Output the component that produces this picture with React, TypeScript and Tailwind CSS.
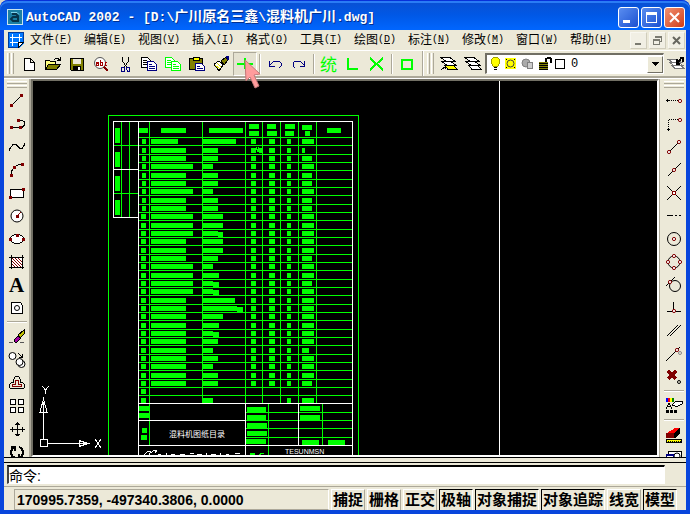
import type { ReactNode } from "react";

const GREEN = "#00ff00";
const RED = "#800000";

type Tool = { label: string; icon: ReactNode } | "sep";

function Icon({ children }: { children: ReactNode }) {
  return (
    <svg width="16" height="16" viewBox="0 0 16 16" fill="none" stroke="#000" shapeRendering="crispEdges" overflow="visible" aria-hidden="true">
      {children}
    </svg>
  );
}

function Dot({ x, y }: { x: number; y: number }) {
  return <rect x={x - 1} y={y - 1} width="3" height="3" fill={RED} stroke="none" />;
}

function Ring({ x, y }: { x: number; y: number }) {
  return <circle cx={x} cy={y} r="1.6" fill="#fff" stroke={RED} shapeRendering="geometricPrecision" />;
}

function Circle({ x, y, r, fill = "none", stroke = "#000" }: { x: number; y: number; r: number; fill?: string; stroke?: string }) {
  return <circle cx={x} cy={y} r={r} fill={fill} stroke={stroke} shapeRendering="geometricPrecision" />;
}

const standardTools: Tool[] = [
  { label: "新建", icon: <path d="M3.5 2.5h6l4 4v8h-10zM9.5 2.5v4h4" fill="#fff" /> },
  {
    label: "打开",
    icon: (
      <>
        <path d="M.5 13.5v-9h4l1 1h5v3" fill="#ffff80" />
        <path d="M.5 13.5l3-5h12l-4 5z" fill="#808000" />
        <path d="M9 3.5l2-1h2l2 2M15.5 1v4M12 4.5h3" />
      </>
    ),
  },
  {
    label: "保存",
    icon: (
      <>
        <path d="M1.5 2.5h13v12h-12l-1-1z" fill="#808000" />
        <path d="M4 3h8v5H4z" fill="#ece9d8" stroke="none" />
        <path d="M4 10h8v4H4z" fill="#000" stroke="none" />
        <path d="M9 11h2v3H9z" fill="#fff" stroke="none" />
      </>
    ),
  },
  {
    label: "查找",
    icon: (
      <>
        <Circle x={7} y={7} r={5.5} fill="#fff" stroke="#555" />
        <path d="M3 6.5h2v3H3v-2h2M7.5 4v5.5h2v-3h-2M14 6.5h-2v3h2" stroke="#a00000" />
        <path d="M11 11l4 4" stroke={RED} strokeWidth="2" />
      </>
    ),
  },
  {
    label: "剪切",
    icon: (
      <>
        <path d="M5.5 1v4l4 6M11.5 1v4l-4 6" />
        <path d="M4.5 11h2l1 1v3h-3zM9.5 11h3v4h-2l-1-2z" stroke="#000080" />
      </>
    ),
  },
  {
    label: "复制",
    icon: (
      <>
        <path d="M.5 1.5h6l3 3v7h-9z" fill="#fff" />
        <path d="M2 4.5h4M2 6.5h6M2 8.5h6" />
        <path d="M6.5 5.5h6l3 3v6h-9z" fill="#fff" stroke="#000080" />
        <path d="M8 8.5h3M8 10.5h6M8 12.5h6" stroke="#000080" />
      </>
    ),
  },
  {
    label: "带基点复制",
    icon: (
      <>
        <path d="M.5 1.5h6l3 3v7h-9z" fill="#fff" stroke={GREEN} />
        <path d="M2 4.5h4M2 6.5h6M2 8.5h6" stroke={GREEN} />
        <path d="M6.5 5.5h6l3 3v6h-9z" fill="#fff" stroke={GREEN} />
        <path d="M8 8.5h3M8 10.5h6M8 12.5h6" stroke={GREEN} />
      </>
    ),
  },
  {
    label: "粘贴",
    icon: (
      <>
        <path d="M.5 2.5h13v11H.5z" fill="#808000" />
        <path d="M4 1h6v3H4z" fill="#ffff00" />
        <path d="M6.5 7.5h6l3 3v4h-9z" fill="#fff" stroke="#000080" />
        <path d="M8 10.5h3M8 12.5h6" stroke="#000080" />
      </>
    ),
  },
  {
    label: "特性匹配",
    icon: (
      <>
        <path d="M1 8l5-3 4 4-4 6z" fill="#fff" />
        <path d="M2 9l5 4M4 7l4 4" stroke="#e0e000" />
        <path d="M8 5l5-4 2 3-4 5z" fill="#808000" />
        <path d="M13 1h2v3" stroke="#000080" strokeWidth="2" />
      </>
    ),
  },
  { label: "平移", icon: <path d="M0 8h16M8 2v11" stroke={GREEN} strokeWidth="2" /> },
  "sep",
  { label: "放弃", icon: <path d="M2.5 5v5h5M3 9l3-3 3-1h3l2 2v3l-2 2" stroke="#000080" /> },
  { label: "重做", icon: <path d="M13.5 5v5h-5M13 9l-3-3-3-1H4L2 7v3l2 2" stroke="#000080" /> },
  "sep",
  { label: "统", icon: <text x="-1" y="15" fontSize="17" fill={GREEN} stroke="none" fontFamily="Noto Sans CJK SC, sans-serif">统</text> },
  { label: "直角", icon: <path d="M3 2v11h10" stroke={GREEN} strokeWidth="2" /> },
  { label: "交叉", icon: <path d="M1 2l13 12M14 2L1 14" stroke={GREEN} strokeWidth="2" /> },
  "sep",
  { label: "矩形框", icon: <path d="M3 4h10v9H3z" stroke={GREEN} strokeWidth="2" /> },
];

const drawTools: Tool[] = [
  { label: "直线", icon: <><path d="M2 13L13 2" /><Dot x={2} y={12} /><Dot x={12} y={2} /></> },
  { label: "多段线", icon: <><path d="M2 11.500h11l2-2v-4l-2-1.500h-4" /><Dot x={2} y={11} /><Dot x={11} y={11} /><Dot x={9} y={4} /></> },
  { label: "样条曲线", icon: <path d="M.5 12v-2L4 5.500h3l4 4h2l2-3v-3" /> },
  { label: "圆弧", icon: <><path d="M2 13c0-6 5-11 12-11" /><Dot x={2} y={13} /><Dot x={5} y={5} /><Dot x={13} y={2} /></> },
  { label: "矩形", icon: <><path d="M1.5 4.500h13v8h-13z" fill="#fff" /><Dot x={14} y={4} /><Dot x={1} y={12} /></> },
  { label: "圆", icon: <><Circle x={8} y={8} r={6} fill="#fff" /><path d="M8 8l4-4" stroke={RED} /><Dot x={8} y={8} /></> },
  { label: "椭圆", icon: <><ellipse cx="8" cy="8" rx="7" ry="4.5" fill="#fff" /><Dot x={1} y={8} /><Dot x={8} y={4} /><Dot x={14} y={8} /></> },
  {
    label: "图案填充",
    icon: (
      <>
        <path d="M3 4h10v9H3z" fill="#fff" stroke="none" />
        <path d="M3 4l9 9M6 4l7 7M9 4l4 4M3 7l6 6M3 10l3 3" stroke={RED} />
        <path d="M0 3.5h15M0 13.5h15M2.5 1v14M13.5 1v14" />
      </>
    ),
  },
  { label: "文字", icon: <text x="0" y="15" fontSize="21" fontWeight="bold" fill="#000" stroke="none" fontFamily="Liberation Serif, serif">A</text> },
  { label: "面域", icon: <><path d="M2.5 2.5h9l2 3v8h-11z" fill="#fff" /><Circle x={8} y={8} r={2.5} /></> },
  "sep",
  {
    label: "删除",
    icon: (
      <>
        <path d="M9 6l6-5v4l-5 5z" fill="#c0c000" />
        <path d="M5 11l4-4 3 2-4 4H6z" fill="#a000a0" />
        <path d="M0 13.5h4M11 13.5h4" stroke="#555" />
      </>
    ),
  },
  {
    label: "复制对象",
    icon: (
      <>
        <Circle x={3.5} y={4} r={3.5} fill="#fff" />
        <Circle x={12.5} y={12} r={3.5} fill="#fff" />
        <Circle x={10.5} y={10} r={3.5} fill="#fff" />
        <path d="M9 1l4 4M13.5 2v4M10 5.5h4" />
      </>
    ),
  },
  {
    label: "偏移",
    icon: (
      <>
        <path d="M.5 12.500v-3l2-2h2v-3l2-3h3l2 3v3h2l2 2v3l-1 1h-13z" />
        <path d="M3.5 11.500v-2h3v-4h3v4h3v2z" stroke={RED} />
      </>
    ),
  },
  {
    label: "阵列",
    icon: <path d="M1.5 1.5h5v5h-5zM9.5 1.5h5v5h-5zM1.5 9.5h5v5h-5zM9.5 9.5h5v5h-5z" fill="#fff" />,
  },
  { label: "移动", icon: <path d="M8.5 1v14M1 8.5h15M6 3.5h5M3.5 6v5M6 13.5h5M13.5 6v5M7 2.5h3M7 14.5h3" /> },
  { label: "旋转", icon: <path d="M6 14c-5-2-5-8-1-11M2 3h4v4M10 3c5 2 5 8 1 11M14 14h-4v-4" strokeWidth="2" /> },
];

const snapTools: Tool[] = [
  { label: "临时追踪点", icon: <><path d="M0 7.5h3M1.5 6v3" /><path d="M3 7.5h9" strokeDasharray="1 1" /><Ring x={14} y={8} /></> },
  { label: "捕捉自", icon: <><path d="M2.5 3.5v10M3 3.5h9" strokeDasharray="1 1" /><path d="M1 13.5h3M2.5 12v3" /><Ring x={14} y={4} /></> },
  { label: "端点", icon: <><path d="M3 13L13 3" /><Ring x={3} y={13} /><Ring x={13} y={3} /></> },
  { label: "中点", icon: <><path d="M2 14L15 1" /><Ring x={8} y={8} /></> },
  { label: "交点", icon: <><path d="M1 1l14 14M15 1L1 15" /><rect x="6.5" y="6.5" width="3" height="3" fill="#fff" stroke={RED} /></> },
  { label: "外观交点", icon: <path d="M1 7.5h6M9 7.5h2M13 7.5h2" /> },
  { label: "圆心", icon: <><Circle x={8} y={8} r={6.5} /><Ring x={8} y={8} /></> },
  { label: "象限点", icon: <><Circle x={8} y={8} r={6} /><Ring x={8} y={2} /><Ring x={2} y={8} /><Ring x={14} y={8} /><Ring x={8} y={14} /></> },
  { label: "切点", icon: <><Circle x={9} y={9} r={5.5} /><path d="M0 9l9-9" /><Ring x={4} y={5} /></> },
  { label: "垂足", icon: <><path d="M7.5 2v10M1 11.5h14" /><Ring x={8} y={11} /></> },
  { label: "平行", icon: <path d="M1 13L12 2M4 13L15 2" /> },
  { label: "最近点", icon: <><path d="M0 15L14 1" /><Circle x={14} y={7} r={1.5} stroke="#888" /><Ring x={11} y={4} /></> },
  { label: "无捕捉", icon: <><path d="M2 2l8 8M10 2l-8 8" stroke={RED} strokeWidth="3" /><Circle x={13} y={13} r={1.5} /></> },
  "sep",
  {
    label: "对象捕捉设置",
    icon: (
      <>
        <path d="M0 0h2v4H0z" fill="#0000ff" stroke="none" />
        <path d="M2 0h2v4H2z" fill="#ff0000" stroke="none" />
        <path d="M4 0h2v4H4z" fill="#ffff00" stroke="none" />
        <path d="M6 0h2v4H6z" fill="#008000" stroke="none" />
        <path d="M0 11l3-6 3 6M1 8.5h4" />
        <path d="M6 7l4-4h6v3l-4 2H9z" fill="#fff" />
        <path d="M0 13.5h3M4 13.5h3M8 13.5h3" strokeWidth="3" />
      </>
    ),
  },
  "sep",
  {
    label: "渲染",
    icon: (
      <>
        <path d="M1 6l8-5h5l-6 5z" fill="#ff0000" stroke="none" />
        <path d="M0 6h8v5H0z" fill={RED} stroke="none" />
        <path d="M8 6l6-5v5l-5 5H8z" fill="#000" stroke="none" />
        <path d="M.5 12.5h15v3H.5z" fill="#ffff00" />
        <path d="M2 14.5h13" strokeDasharray="1 1" />
      </>
    ),
  },
  {
    label: "命名视图",
    icon: (
      <>
        <path d="M2.5 1.5h13v13h-13z" fill="#fff" />
        <Circle x={11} y={6} r={3} />
        <path d="M.5 4.5h7v5h-7z" fill="#fff" stroke="#000080" />
        <path d="M0 5.5h8" stroke="#000080" />
      </>
    ),
  },
];

const menus = [
  ["文件", "F"],
  ["编辑", "E"],
  ["视图", "V"],
  ["插入", "I"],
  ["格式", "O"],
  ["工具", "T"],
  ["绘图", "D"],
  ["标注", "N"],
  ["修改", "M"],
  ["窗口", "W"],
  ["帮助", "H"],
];

const modes = [
  { label: "捕捉", on: false },
  { label: "栅格", on: false },
  { label: "正交", on: false },
  { label: "极轴", on: true },
  { label: "对象捕捉", on: true },
  { label: "对象追踪", on: true },
  { label: "线宽", on: false },
  { label: "模型", on: true },
];

function GripV() {
  return (
    <div className="flex shrink-0 gap-px py-0.5 pl-[3px]" aria-hidden="true">
      <i className="w-[3px] border-r border-l border-l-white border-r-[#aca899]" />
      <i className="w-[3px] border-r border-l border-l-white border-r-[#aca899]" />
    </div>
  );
}

function GripH() {
  return (
    <div className="flex w-full shrink-0 flex-col gap-px px-0.5 pt-0.5 pb-px" aria-hidden="true">
      <i className="h-[3px] border-t border-b border-t-white border-b-[#aca899]" />
      <i className="h-[3px] border-t border-b border-t-white border-b-[#aca899]" />
    </div>
  );
}

function ToolColumn({ tools, label }: { tools: Tool[]; label: string }) {
  return (
    <div role="toolbar" aria-label={label} className="flex min-h-0 w-6 shrink-0 flex-col overflow-hidden">
      <GripH />
      {tools.map((tool, i) =>
        tool === "sep" ? (
          <div key={i} className="mx-0.5 my-0.5 h-0.5 shrink-0 border-t border-b border-t-[#aca899] border-b-white" />
        ) : (
          <button key={i} aria-label={tool.label} className="flex h-[23px] w-6 shrink-0 items-center justify-center">
            <Icon>{tool.icon}</Icon>
          </button>
        ),
      )}
    </div>
  );
}

// Parts list of the drawing: one entry per row, top to bottom.
const rowY = (i: number) => 137 + Math.floor((i * 25 + 1) / 3);
const nameW = [27, 35, 35, 42, 35, 35, 42, 35, 35, 42, 42, 42, 35, 35, 35, 42, 42, 42, 42, 35, 35, 35, 35, 35, 35, 35, 35, 35, 35, 35, 0, 0];
const codeW = [33, 15, 15, 10, 15, 15, 10, 15, 15, 20, 20, 15, 20, 20, 15, 10, 16, 10, 10, 32, 34, 20, 16, 10, 15, 10, 15, 10, 15, 15, 0, 10];
const codeTail: Record<number, number> = { 11: 5, 17: 6, 18: 6, 20: 6, 23: 6 };
const noteW = [12, 3, 10, 12, 10, 10, 12, 10, 10, 12, 12, 12, 12, 12, 10, 12, 12, 10, 12, 12, 12, 12, 12, 12, 12, 7, 12, 12, 12, 10, 0, 12];

const blocks = [
  [115, 128, 5, 15], [115, 152, 5, 15], [115, 176, 5, 15], [115, 200, 5, 15],
  [139, 128, 9, 5], [161, 128, 25, 5], [209, 128, 34, 5], [327, 128, 14, 5],
  [249, 124, 10, 5], [249, 131, 10, 5], [267, 124, 9, 5], [267, 131, 10, 5],
  [285, 124, 10, 5], [285, 131, 9, 5], [302, 125, 10, 5], [305, 131, 5, 5],
  [139, 406, 10, 5], [139, 413, 10, 5], [142, 428, 5, 5], [141, 435, 6, 5],
  [247, 407, 19, 5], [247, 415, 19, 5], [247, 423, 20, 5], [247, 431, 20, 5], [246, 439, 20, 5],
  [300, 406, 20, 5], [300, 415, 20, 5], [302, 440, 17, 5], [328, 440, 17, 5],
];

function Drawing() {
  return (
    <svg className="block size-full" shapeRendering="crispEdges" role="img" aria-label="混料机图纸目录">
      <g transform="translate(-33 -81)">
        <g fill="none" stroke={GREEN}>
          <path d="M108.5 600V115.5h250V600" />
          <path d="M121.5 122v95M129.5 122v95M113 145.5h25M113 193.5h25" />
          <path d="M149.5 122v323M202.5 122v281M245.5 122v281M262.5 122v281M280.5 122v281M298.5 122v281M316.5 122v281" />
          {nameW.map((_, i) => (
            <path key={i} d={`M139 ${rowY(i) + 0.5}H352`} />
          ))}
          <path d="M245 412.5h107M245 420.5h107M245 428.5h107M245 437.5h107M268.5 404v60M322.5 404v41" />
        </g>
        <g fill={GREEN}>
          {nameW.map((w, i) => {
            const y = rowY(i + 1) - 6;
            return (
              <g key={i}>
                <rect x={i < 9 ? 142 : 141} y={y} width={i < 9 ? 4 : 5} height="5" />
                <rect x="151" y={y} width={w} height="5" />
                <rect x="203" y={y} width={codeW[i]} height="5" />
                <rect x={203 + codeW[i]} y={y + 1} width={codeTail[i] ?? 0} height="5" />
                {i < 30 && <rect x="251" y={y} width="5" height="5" />}
                {i < 30 && <rect x="269" y={y} width="6" height="5" />}
                {i !== 30 && <rect x="287" y={y} width="4" height="5" />}
                <rect x="302" y={y} width={noteW[i]} height="5" />
              </g>
            );
          })}
          {blocks.map(([x, y, w, h]) => (
            <rect key={`${x}-${y}`} x={x} y={y} width={w} height={h} />
          ))}
          <path d="M256 147h1v2h1v-2h1v1h3v5h-3v-1h-2v-2h-1z" />
          <path d="M250 453h5v2h-3v1h-2zM260 453h4v1h-3v2h-2z" />
        </g>
        <g fill="none" stroke="#fff">
          <path d="M113.5 217V121.5h239V600M113 217.5h25M113 169.5h25M138.5 121V600" />
          <path d="M138 403.5h214M138 420.5h107M138 445.5h214M245.5 403V600M298.5 404v41M499.5 0V3000" />
          <path d="M144 455l4-4h3l-2 4M151 453l3-3h3l-2 3M158 454h3M166 453v3M171 454h4M180 454h5M190 453h4M197 454h5M206 453v3M211 454h5M220 453v3M226 454h3M235 453h5" />
          <path d="M40.5 439.5h7v7h-7zM43.5 439v-27M48 443.5h31" />
          <path d="M43.5 399l-3.5 13h7zM43.5 402v10M88 443.5l-9-3v6zM79 443.5h9" />
          <path d="M42 386l3.5 4v4M49 386l-3.5 4M95 439l6 9M101 439l-6 9" />
        </g>
        <text x="169" y="437" fontSize="8" fill="#fff" fontFamily="Noto Sans CJK SC, sans-serif">混料机图纸目录</text>
        <text x="285" y="454" fontSize="7" fill="#fff" fontFamily="Liberation Sans, sans-serif">TESUNMSN</text>
      </g>
    </svg>
  );
}

function TitleBar() {
  return (
    <header className="flex h-[30px] shrink-0 items-center rounded-t-lg bg-linear-to-b from-[#0a4fd0] via-[#0058e6] to-[#0066ff] pt-1 pr-[5px] pl-[7px] shadow-[inset_0_1px_0_#0831d9,inset_0_3px_0_#2a7cf5]">
      <svg width="16" height="16" viewBox="0 0 16 16" aria-hidden="true">
        <rect x=".5" y=".5" width="15" height="15" fill="#1c7fa3" stroke="#c8e4f0" />
        <path d="M5 5h4l2 2v5H6L4 10l2-2h4" fill="none" stroke="#06334a" strokeWidth="2" />
        <path d="M4 3.500h6l2 2" fill="none" stroke="#7fd0e8" />
      </svg>
      <h1 className="ml-[3px] flex-1 truncate font-['Liberation_Mono','Noto_Sans_CJK_SC',monospace] text-[13px] leading-5 font-bold text-white [text-shadow:1px_1px_0_#003092]">
        AutoCAD 2002 - [D:\<span className="text-sm leading-5">广川原名三鑫</span>\<span className="text-sm leading-5">混料机广川</span>.dwg]
      </h1>
      <div className="flex gap-0.5">
        <button aria-label="最小化" className="size-[21px] rounded-[3px] border border-white bg-linear-to-br from-[#5a8df0] to-[#1c4fd0]">
          <svg width="19" height="19" viewBox="0 0 19 19" aria-hidden="true"><path d="M4 12h7v3H4z" fill="#fff" /></svg>
        </button>
        <button aria-label="最大化" className="size-[21px] rounded-[3px] border border-white bg-linear-to-br from-[#5a8df0] to-[#1c4fd0]">
          <svg width="19" height="19" viewBox="0 0 19 19" aria-hidden="true"><path d="M4 4h11v11H4zM5 7v7h9V7z" fill="#fff" fillRule="evenodd" /></svg>
        </button>
        <button aria-label="关闭" className="size-[21px] rounded-[3px] border border-white bg-linear-to-br from-[#f09070] to-[#d03a10]">
          <svg width="19" height="19" viewBox="0 0 19 19" aria-hidden="true"><path d="M5 5l9 9M14 5l-9 9" stroke="#fff" strokeWidth="2" /></svg>
        </button>
      </div>
    </header>
  );
}

function MenuBar() {
  return (
    <nav aria-label="菜单" className="flex h-5 shrink-0 items-center pr-px pl-1">
      <svg width="16" height="16" viewBox="0 0 16 16" shapeRendering="crispEdges" aria-hidden="true">
        <path d="M0 0h16v11l-5 5H0z" fill="#0078ff" />
        <path d="M.5.5h15v10l-5 5H.5z" fill="none" stroke="#003c9c" />
        <path d="M2 5.5h3M12 5.5h2M2 10.5h3M4.5 11v3M4.5 2v3M11.5 2v3M4.5 5.5h7v5h-7z" fill="none" stroke="#fff" />
        <path d="M10.5 15.5v-5h5z" fill="#fff" stroke="#000" />
      </svg>
      <ul className="ml-1.5 flex flex-1 gap-3 overflow-hidden">
        {menus.map(([name, key]) => (
          <li key={key} className="shrink-0">
            <button className="flex w-[42px] items-center text-xs leading-5 whitespace-nowrap">
              {name}
              <span className="font-['Liberation_Mono',monospace] text-[10px]">
                (<u>{key}</u>)
              </span>
            </button>
          </li>
        ))}
      </ul>
      <div className="flex gap-0.5">
        <button aria-label="最小化图形" className="size-[17px] border border-[#f8f7f0] border-r-[#d0cdbc] border-b-[#d0cdbc] bg-[#f1efe4]">
          <svg width="15" height="15" viewBox="0 0 15 15" aria-hidden="true"><path d="M4 10h6v2H4z" fill="#7a7a70" /></svg>
        </button>
        <button aria-label="还原图形" className="size-[17px] border border-[#f8f7f0] border-r-[#d0cdbc] border-b-[#d0cdbc] bg-[#f1efe4]">
          <svg width="15" height="15" viewBox="0 0 15 15" fill="none" stroke="#7a7a70" shapeRendering="crispEdges" aria-hidden="true"><path d="M3.5 6.5h6v5h-6zM3 7.5h7M5.5 5V3.5h6v5H10M5 4.5h7" /></svg>
        </button>
        <button aria-label="关闭图形" className="size-[17px] border border-[#f8f7f0] border-r-[#d0cdbc] border-b-[#d0cdbc] bg-[#f1efe4]">
          <svg width="15" height="15" viewBox="0 0 15 15" aria-hidden="true"><path d="M4 4l7 7M11 4l-7 7" stroke="#66665e" strokeWidth="2" /></svg>
        </button>
      </div>
    </nav>
  );
}

function Layers({ current }: { current?: boolean }) {
  return (
    <Icon>
      <path d="M4 9.500h9l3 4H7z" fill={current ? "#ffff00" : "#fff"} />
      <path d="M1 5.500h9l5 4H6z" fill="#fff" />
      <path d="M0 1.500h9l5 4H5z" fill="#fff" />
      {current && <path d="M0 14l4-3M4 10v3" />}
    </Icon>
  );
}

function LayerBox() {
  return (
    <div className="flex h-[21px] w-[179px] shrink-0 items-center border-t-2 border-l-2 border-r border-b border-t-[#716f64] border-l-[#716f64] border-r-white border-b-white bg-white pl-0.5">
      <svg width="76" height="16" viewBox="0 0 76 16" fill="none" stroke="#000" shapeRendering="crispEdges" aria-hidden="true">
        <path d="M4.5 10.5l-2-3v-4l2-2h4l2 2v4l-2 3z" fill="#ffff00" stroke="#a0a000" />
        <path d="M5 11.500h3M5 13.500h3" />
        <path d="M16 2h11v11H16z" fill="#ffff00" stroke="none" />
        <Circle x={21.5} y={7.5} r={3.5} stroke="#444" />
        <path d="M17 3.500h1M25 3.500h1M17 11.500h1M25 11.500h1" />
        <Circle x={37} y={7} r={4} fill="#aaa" stroke="#808080" />
        <path d="M38.5 6.5h5v6h-5z" fill="#ccc" stroke="#808080" />
        <path d="M50 6h9v8h-9z" fill="#808000" stroke="none" />
        <path d="M50 7.5h9M50 9.5h9M50 11.5h9M50 13.5h9" />
        <path d="M57 6V3l2-1h2l1 1v4" strokeWidth="2" />
        <path d="M66.5 3.5h9v9h-9z" fill="#fff" />
      </svg>
      <select aria-label="图层" className="h-4 flex-1 appearance-none bg-white pl-1.5 font-['Liberation_Mono',monospace] text-xs leading-4 text-black outline-none">
        <option>0</option>
      </select>
      <span className="flex h-[17px] w-4 items-center justify-center border border-white border-r-[#716f64] border-b-[#716f64] bg-[#ece9d8]" aria-hidden="true">
        <svg width="7" height="4" viewBox="0 0 7 4" shapeRendering="crispEdges"><path d="M0 0h7L3.500 4z" /></svg>
      </span>
    </div>
  );
}

function Toolbars() {
  return (
    <div className="flex h-7 shrink-0 border-t border-b-2 border-t-white border-b-[#aca899]">
      <div role="toolbar" aria-label="标准" className="flex w-[419px] shrink-0 border-r border-[#aca899]">
        <GripV />
        <div className="ml-[3px] flex items-center">
          {standardTools.map((tool, i) =>
            tool === "sep" ? (
              <div key={i} className="mx-0.5 h-5 w-0.5 border-r border-l border-r-white border-l-[#aca899]" />
            ) : tool.label === "平移" ? (
              <button key={i} aria-label={tool.label} aria-pressed className="relative flex size-6 items-center justify-center border border-[#aca899] border-r-white border-b-white bg-[#e4e1d0]">
                <Icon>{tool.icon}</Icon>
                <svg width="18" height="32" viewBox="0 0 18 32" className="absolute top-1.5 left-2.5 z-10" aria-hidden="true">
                  <path d="M1 1l15 14-6 1 5 11-4 2-5-11-4 4z" fill="#ff9c9c" stroke="#c07878" />
                </svg>
              </button>
            ) : (
              <button key={i} aria-label={tool.label} className="flex size-6 items-center justify-center">
                <Icon>{tool.icon}</Icon>
              </button>
            ),
          )}
        </div>
      </div>
      <div role="toolbar" aria-label="图层" className="flex min-w-0 flex-1 overflow-hidden border-l border-white">
        <GripV />
        <div className="ml-[3px] flex min-w-0 items-center">
          <button aria-label="将对象的图层置为当前" className="flex size-6 shrink-0 items-center justify-center"><Layers current /></button>
          <button aria-label="图层特性" className="flex size-6 shrink-0 items-center justify-center"><Layers /></button>
          <LayerBox />
          <button aria-label="上一个图层" className="flex size-6 shrink-0 items-center justify-center">
            <Icon>
              <path d="M4 9.500h9l3 3H7zM2 6.500h9l4 3H6zM0 3.500h9l5 3H5z" fill="#fff" stroke="#777" />
              <path d="M9 3v5h3M10 7l3-5h2v4" strokeWidth="2" />
            </Icon>
          </button>
        </div>
      </div>
    </div>
  );
}

export default function App() {
  return (
    <div className="h-screen bg-[#d8d4c8] font-['Liberation_Sans','Noto_Sans_CJK_SC',sans-serif] text-black">
      <div className="flex h-full flex-col overflow-hidden rounded-t-lg bg-[#0054e3]">
        <TitleBar />
        <div className="flex min-h-0 flex-1 flex-col border-r-4 border-b-4 border-l-4 border-[#0845dc] bg-[#ece9d8]">
          <MenuBar />
          <Toolbars />

          <div className="flex min-h-0 flex-1 border-t border-white">
            <div className="flex border-r-2 border-[#aca899] pl-px">
              <ToolColumn tools={drawTools} label="绘图" />
            </div>
            <main className="min-w-0 flex-1 overflow-hidden border-2 border-t-[#716f64] border-r-white border-b-white border-l-[#716f64] bg-black">
              <Drawing />
            </main>
            <div className="flex border-l border-[#aca899] pl-0.5">
              <ToolColumn tools={snapTools} label="对象捕捉" />
            </div>
          </div>

          <div className="h-1.5 shrink-0 border-t border-b border-black bg-[#ece9d8]" />
          <div className="shrink-0 border-b border-[#aca899] py-0.5 pr-[21px] pl-[3px]">
            <input
              aria-label="命令行"
              defaultValue="命令:"
              className="block h-[19px] w-full border-t-2 border-l-2 border-r border-b border-t-black border-l-[#404040] border-r-white border-b-white bg-white text-sm leading-4 outline-none"
            />
          </div>
          <footer className="flex h-[23px] shrink-0 gap-0.5 pt-0.5 pr-[9px] pl-2.5">
            <output className="min-w-0 flex-1 truncate border border-[#aca899] border-r-white pl-0.5 text-sm leading-5 font-bold">
              170995.7359, -497340.3806, 0.0000
            </output>
            {modes.map((mode) => (
              <button
                key={mode.label}
                aria-pressed={mode.on}
                className={
                  mode.on
                    ? "shrink-0 border-t border-r border-l border-t-black border-l-black border-r-white px-px text-[15px] leading-5 font-bold"
                    : "shrink-0 border-t border-r border-l border-t-white border-l-white border-r-[#aca899] px-px text-[15px] leading-5 font-bold"
                }
              >
                {mode.label}
              </button>
            ))}
          </footer>
        </div>
      </div>
    </div>
  );
}
